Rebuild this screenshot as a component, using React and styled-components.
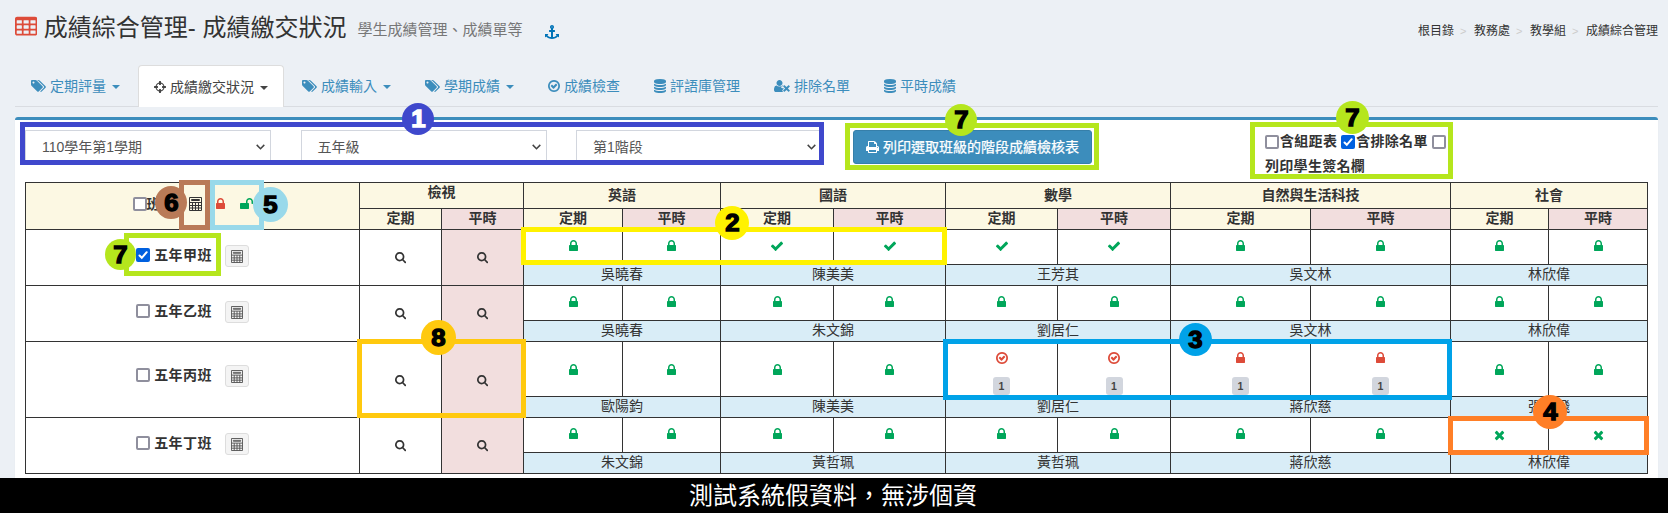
import React from "react";
import styled, { createGlobalStyle } from "styled-components";

const GlobalStyle = createGlobalStyle`
  *, *::before, *::after { box-sizing: border-box; }
  body {
    margin: 0;
    background: #ecf0f5;
    color: #333;
    font: 14px/20px "Liberation Sans", "Noto Sans CJK TC", sans-serif;
    overflow: hidden;
  }
`;

const ICONS = {
  table: [64, 0, 1664, "M64 288q0-66 47-113t113-47h1344q66 0 113 47t47 113v1088q0 66-47 113t-113 47h-1344q-66 0-113-47t-47-113zM224 384q-32 0-32 32v192q0 32 32 32h320q32 0 32-32v-192q0-32-32-32zM736 384q-32 0-32 32v192q0 32 32 32h320q32 0 32-32v-192q0-32-32-32zM1248 384q-32 0-32 32v192q0 32 32 32h320q32 0 32-32v-192q0-32-32-32zM224 768q-32 0-32 32v192q0 32 32 32h320q32 0 32-32v-192q0-32-32-32zM736 768q-32 0-32 32v192q0 32 32 32h320q32 0 32-32v-192q0-32-32-32zM1248 768q-32 0-32 32v192q0 32 32 32h320q32 0 32-32v-192q0-32-32-32zM224 1152q-32 0-32 32v192q0 32 32 32h320q32 0 32-32v-192q0-32-32-32zM736 1152q-32 0-32 32v192q0 32 32 32h320q32 0 32-32v-192q0-32-32-32zM1248 1152q-32 0-32 32v192q0 32 32 32h320q32 0 32-32v-192q0-32-32-32z"],
  anchor: [0, 0, 1792, "M960 256q0-26-19-45t-45-19-45 19-19 45 19 45 45 19 45-19 19-45zm832 928v352q0 22-20 30-8 2-12 2-12 0-23-9l-93-93q-119 143-318.5 226.5t-429.5 83.5-429.5-83.5-318.5-226.5l-93 93q-9 9-23 9-4 0-12-2-20-8-20-30v-352q0-14 9-23t23-9h352q22 0 30 20 8 19-7 35l-100 100q67 91 189.5 153.5t271.5 82.5v-647h-192q-26 0-45-19t-19-45v-128q0-26 19-45t45-19h192v-163q-58-34-93-92.5t-35-128.5q0-106 75-181t181-75 181 75 75 181q0 70-35 128.5t-93 92.5v163h192q26 0 45 19t19 45v128q0 26-19 45t-45 19h-192v647q149-20 271.5-82.5t189.5-153.5l-100-100q-15-16-7-35 8-20 30-20h352q14 0 23 9t9 23z"],
  tags: [0, 0, 1920, "M448 448q0-53-37.5-90.5t-90.5-37.5-90.5 37.5-37.5 90.5 37.5 90.5 90.5 37.5 90.5-37.5 37.5-90.5zm1067 576q0 53-37 90l-491 492q-39 37-91 37-53 0-90-37l-715-716q-38-37-64.5-101t-26.5-117v-416q0-52 38-90t90-38h416q53 0 117 26.5t102 64.5l715 714q37 39 37 91zm384 0q0 53-37 90l-491 492q-39 37-91 37-36 0-59-14t-53-45l470-470q37-37 37-90 0-52-37-91l-715-714q-38-38-102-64.5t-117-26.5h224q53 0 117 26.5t102 64.5l715 714q37 39 37 91z"],
  crosshairs: [128, 0, 1536, "M1325 1024h-109q-26 0-45-19t-19-45v-128q0-26 19-45t45-19h109q-32-108-112.5-188.5t-188.5-112.5v109q0 26-19 45t-45 19h-128q-26 0-45-19t-19-45v-109q-108 32-188.5 112.5t-112.5 188.5h109q26 0 45 19t19 45v128q0 26-19 45t-45 19h-109q32 108 112.5 188.5t188.5 112.5v-109q0-26 19-45t45-19h128q26 0 45 19t19 45v109q108-32 188.5-112.5t112.5-188.5zm339-192v128q0 26-19 45t-45 19h-143q-37 161-154.5 278.5t-278.5 154.5v143q0 26-19 45t-45 19h-128q-26 0-45-19t-19-45v-143q-161-37-278.5-154.5t-154.5-278.5h-143q-26 0-45-19t-19-45v-128q0-26 19-45t45-19h143q37-161 154.5-278.5t278.5-154.5v-143q0-26 19-45t45-19h128q26 0 45 19t19 45v143q161 37 278.5 154.5t154.5 278.5h143q26 0 45 19t19 45z"],
  checkCircle: [128, 0, 1536, "M1299 813l-422 422q-19 19-45 19t-45-19l-294-294q-19-19-19-45t19-45l102-102q19-19 45-19t45 19l147 147 275-275q19-19 45-19t45 19l102 102q19 19 19 45t-19 45zm141 83q0-148-73-273t-198-198-273-73-273 73-198 198-73 273 73 273 198 198 273 73 273-73 198-198 73-273zm224 0q0 209-103 385.5t-279.5 279.5-385.5 103-385.5-103-279.5-279.5-103-385.5 103-385.5 279.5-279.5 385.5-103 385.5 103 279.5 279.5 103 385.5z"],
  database: [128, 0, 1536, "M896 768q237 0 443-43t325-127v170q0 69-103 128t-280 93.5-385 34.5-385-34.5-280-93.5-103-128v-170q119 84 325 127t443 43zm0 768q237 0 443-43t325-127v170q0 69-103 128t-280 93.5-385 34.5-385-34.5-280-93.5-103-128v-170q119 84 325 127t443 43zm0-384q237 0 443-43t325-127v170q0 69-103 128t-280 93.5-385 34.5-385-34.5-280-93.5-103-128v-170q119 84 325 127t443 43zm0-1152q208 0 385 34.5t280 93.5 103 128v128q0 69-103 128t-280 93.5-385 34.5-385-34.5-280-93.5-103-128v-128q0-69 103-128t280-93.5 385-34.5z"],
  userTimes: [0, 0, 2048, "M704 896q-159 0-271.5-112.5t-112.5-271.5 112.5-271.5 271.5-112.5 271.5 112.5 112.5 271.5-112.5 271.5-271.5 112.5zm1077 320l249 249q9 9 9 23 0 13-9 22l-136 136q-9 9-22 9-14 0-23-9l-249-249-249 249q-9 9-23 9-13 0-22-9l-136-136q-9-9-9-22 0-14 9-23l249-249-249-249q-9-9-9-23 0-13 9-22l136-136q9-9 22-9 14 0 23 9l249 249 249-249q9-9 23-9 13 0 22 9l136 136q9 9 9 22 0 14-9 23zm-498 0l-181 181q-37 37-37 91 0 53 37 90l83 83q-21 3-44 3h-874q-121 0-194-69t-73-190q0-53 3.5-103.5t14-109 26.5-108.5 43-97.5 62-81 85.5-53.5 111.5-20q19 0 39 17 79 61 154.5 91.5t164.5 30.5 164.5-30.5 154.5-91.5q20-17 39-17 132 0 217 96h-223q-53 0-90 37t-37 90q0 54 37 91z"],
  print: [64, 0, 1664, "M448 1536h896v-256h-896v256zm0-640h896v-384h-160q-40 0-68-28t-28-68v-160h-640v640zm1152 64q0-26-19-45t-45-19-45 19-19 45 19 45 45 19 45-19 19-45zm128 0v416q0 13-9.5 22.5t-22.5 9.5h-224v160q0 40-28 68t-68 28h-960q-40 0-68-28t-28-68v-160h-224q-13 0-22.5-9.5t-9.5-22.5v-416q0-79 56.5-135.5t135.5-56.5h64v-544q0-40 28-68t68-28h672q40 0 88 20t76 48l152 152q28 28 48 76t20 88v256h64q79 0 135.5 56.5t56.5 135.5z"],
  lock: [320, 0, 1152, "M640 768h512v-192q0-106-75-181t-181-75-181 75-75 181v192zm832 96v576q0 40-28 68t-68 28h-960q-40 0-68-28t-28-68v-576q0-40 28-68t68-28h32v-192q0-184 132-316t316-132 316 132 132 316v192h32q40 0 68 28t28 68z"],
  unlock: [64, 0, 1664, "M1728 576v256q0 26-19 45t-45 19h-64q-26 0-45-19t-19-45v-256q0-106-75-181t-181-75-181 75-75 181v192h96q40 0 68 28t28 68v576q0 40-28 68t-68 28h-960q-40 0-68-28t-28-68v-576q0-40 28-68t68-28h672v-192q0-185 131.5-316.5t316.5-131.5 316.5 131.5 131.5 316.5z"],
  check: [0, 0, 1792, "M1671 566q0 40-28 68l-724 724-136 136q-28 28-68 28t-68-28l-136-136-362-362q-28-28-28-68t28-68l136-136q28-28 68-28t68 28l294 295 656-657q28-28 68-28t68 28l136 136q28 28 28 68z"],
  times: [192, 0, 1408, "M1490 1322q0 40-28 68l-136 136q-28 28-68 28t-68-28l-294-294-294 294q-28 28-68 28t-68-28l-136-136q-28-28-28-68t28-68l294-294-294-294q-28-28-28-68t28-68l136-136q28-28 68-28t68 28l294 294 294-294q28-28 68-28t68 28l136 136q28 28 28 68t-28 68l-294 294 294 294q28 28 28 68z"],
  search: [64, 128, 1664, "M1216 832q0-185-131.5-316.5t-316.5-131.5-316.5 131.5-131.5 316.5 131.5 316.5 316.5 131.5 316.5-131.5 131.5-316.5zm512 832q0 52-38 90t-90 38q-54 0-90-38l-343-342q-179 124-399 124-143 0-273.5-55.5t-225-150-150-225-55.5-273.5 55.5-273.5 150-225 225-150 273.5-55.5 273.5 55.5 225 150 150 225 55.5 273.5q0 220-124 399l343 343q37 37 37 90z"],
};

const IconSvg = styled.svg`
  display: block;
  flex: none;
  fill: ${(p) => p.$color || "currentColor"};
  margin-top: ${(p) => p.$drop || 0}px;
`;

function Icon({ name, size = 14, color, drop }) {
  const [x, y, w, d] = ICONS[name];
  return (
    <IconSvg
      viewBox={`${x} ${y} ${w} 1792`}
      width={(w * size) / 1792}
      height={size}
      $color={color}
      $drop={drop}
    >
      <path fillRule="evenodd" d={d} />
    </IconSvg>
  );
}

function Calculator({ width = 12, height = 13, color = "#333" }) {
  return (
    <svg width={width} height={height} viewBox="0 0 13 14" fill="none" stroke={color}>
      <path d="M.5 .5h12v13H.5zM2.5 2.5h8v1h-8zM.5 5.5h12M.5 8.5h12M.5 11h12M3.5 5.5v8M6.5 5.5v8M9.5 5.5v8" />
    </svg>
  );
}

const Page = styled.div`
  position: relative;
  width: 1668px;
  height: 513px;
  overflow: hidden;
  display: flex;
  flex-direction: column;
`;

const Header = styled.header`
  height: 65px;
  padding: 0 10px 0 15px;
  display: flex;
  justify-content: space-between;
`;

const TitleGroup = styled.div`
  display: flex;
  padding-top: 15px;
`;

const Title = styled.h1`
  margin: 0 0 0 6.5px;
  font-size: 24px;
  line-height: 26px;
  font-weight: 400;
  white-space: pre;
`;

const Subtitle = styled.small`
  margin: 5px 23px 0 11px;
  font-size: 15px;
  line-height: 20px;
  color: #777;
`;

const Breadcrumb = styled.nav`
  display: flex;
  padding-top: 21px;
  font-size: 12px;
  line-height: 20px;
  color: #333;
`;

const Crumb = styled.span`
  &:not(:first-child)::before {
    content: ">";
    display: inline-block;
    width: 20px;
    padding-left: 6px;
    font-size: 11px;
    color: #ccc;
  }
`;

const Tabs = styled.div`
  display: flex;
  gap: 2px;
  height: 42px;
  margin: 0 10px 0 15px;
  border-bottom: 1px solid #d9dce1;
`;

const Tab = styled.div`
  display: flex;
  align-items: center;
  height: ${(p) => (p.$active ? 42 : 41)}px;
  padding: 0 15px;
  border: 1px solid ${(p) => (p.$active ? "#ddd" : "transparent")};
  border-bottom: 0;
  border-radius: 4px 4px 0 0;
  background: ${(p) => (p.$active ? "#fff" : "transparent")};
  color: ${(p) => (p.$active ? "#444" : "#3c8dbc")};
`;

const TabText = styled.span`
  margin-left: 4px;
`;

const Caret = styled.i`
  margin: 2px 0 0 6px;
  border: 4px solid transparent;
  border-top-color: currentColor;
  border-bottom: 0;
`;

const Box = styled.main`
  flex: none;
  height: 361px;
  margin: 10px 10px 0 15px;
  border-top: 3px solid #3c8dbc;
  border-radius: 3px 3px 0 0;
  background: #fff;
  box-shadow: 0 1px 1px rgba(0, 0, 0, 0.1);
`;

const Toolbar = styled.div`
  display: flex;
  align-items: flex-start;
  height: 62px;
  padding: 10px 0 0 10px;
`;

const SelectBox = styled.div`
  display: flex;
  align-items: center;
  justify-content: space-between;
  width: 246px;
  height: 34px;
  margin-right: 29.5px;
  padding: 0 5px 0 16px;
  border: 1px solid #d2d6de;
  color: #555;
`;

const PrintButton = styled.button`
  display: flex;
  align-items: center;
  gap: 4px;
  width: 239px;
  height: 34px;
  margin-left: 1.5px;
  padding: 0 12px;
  border: 1px solid #367fa9;
  border-radius: 3px;
  background: #3c8dbc;
  color: #fff;
  font: inherit;
  -webkit-text-stroke: 0.25px currentColor;
  white-space: nowrap;
`;

const Options = styled.div`
  width: 190px;
  margin: -1px 0 0 173px;
  font-weight: 700;
  line-height: 25px;
`;

const OptionRow = styled.div`
  display: flex;
  align-items: center;
  gap: 1px;
`;

const OptionLabel = styled.span`
  margin-right: 3px;
  letter-spacing: 0.3px;
`;

const CheckBoxMark = styled.span`
  display: inline-flex;
  align-items: center;
  justify-content: center;
  flex: none;
  width: 14px;
  height: 14px;
  border: ${(p) => (p.$checked ? "0" : "2px solid #8f8f9d")};
  border-radius: 2px;
  background: ${(p) => (p.$checked ? "#0060df" : "#fff")};
`;

function CheckBox({ checked }) {
  return (
    <CheckBoxMark $checked={checked}>
      {checked && (
        <svg width="14" height="14" viewBox="0 0 14 14" fill="none" stroke="#fff" strokeWidth="2" strokeLinecap="round">
          <path d="M3.5 7.5l2.3 2.3 4.9-5.6" />
        </svg>
      )}
    </CheckBoxMark>
  );
}

const Table = styled.div`
  display: grid;
  grid-template-columns: 333px 81px 81px 98px 97px 112px 111px 111px 112px 139px 139px 97px 98px;
  grid-template-rows: 25px 20px 34px 20px 34px 20px 54px 20px 34px 20px;
  gap: 1px;
  width: 1623px;
  margin-left: 10px;
  padding: 1px;
  background: #333;
`;

const TONES = { head: "#fcf8e3", daily: "#f2dede", teacher: "#d9edf7", plain: "#fff" };

const Cell = styled.div`
  display: flex;
  flex-direction: ${(p) => (p.$stack ? "column" : "row")};
  align-items: center;
  justify-content: center;
  grid-column: span ${(p) => p.$cols || 1};
  grid-row: span ${(p) => p.$rows || 1};
  padding-top: ${(p) => p.$sink || 0}px;
  padding-bottom: ${(p) => p.$lift || 0}px;
  background: ${(p) => TONES[p.$tone || "plain"]};
  font-weight: ${(p) => (p.$bold ? 700 : 400)};
  line-height: 18px;
  overflow: hidden;
`;

const ClassName = styled.span`
  margin: 0 13px 0 4px;
  letter-spacing: 0.4px;
`;

const CalcButton = styled.span`
  display: flex;
  align-items: center;
  justify-content: center;
  width: 24px;
  height: 22px;
  margin-top: 2px;
  border: 1px solid #ddd;
  border-radius: 3px;
  background: #f4f4f4;
`;

const HeadTools = styled.div`
  display: flex;
  align-items: center;
  gap: 14.5px;
  margin-left: 14px;
`;

const CountBadge = styled.span`
  width: 17px;
  height: 18px;
  margin-top: 12px;
  border-radius: 3px;
  background: #d2d6de;
  color: #444;
  font-size: 10.5px;
  font-weight: 700;
  text-align: center;
`;

const Caption = styled.footer`
  flex: none;
  height: 35px;
  padding-right: 2px;
  background: #000;
  color: #fff;
  font-size: 24px;
  line-height: 35px;
  text-align: center;
`;

const Frame = styled.div`
  position: absolute;
  left: ${(p) => p.$x}px;
  top: ${(p) => p.$y}px;
  width: ${(p) => p.$w}px;
  height: ${(p) => p.$h}px;
  border: 5px solid ${(p) => p.$color};
`;

const Marker = styled.div`
  position: absolute;
  left: ${(p) => p.$x}px;
  top: ${(p) => p.$y}px;
  display: flex;
  align-items: center;
  justify-content: center;
  width: ${(p) => p.$w}px;
  height: ${(p) => p.$h}px;
  border-radius: 50%;
  background: ${(p) => p.$color};
  color: ${(p) => p.$ink || "#000"};
`;

const Digit = styled.b`
  font: 700 23px/24px "Liberation Sans", sans-serif;
  -webkit-text-stroke: 1.3px currentColor;
  transform: scaleX(1.12);
`;

const TABS = [
  ["tags", "定期評量", true],
  ["crosshairs", "成績繳交狀況", true, true],
  ["tags", "成績輸入", true],
  ["tags", "學期成績", true],
  ["checkCircle", "成績檢查"],
  ["database", "評語庫管理"],
  ["userTimes", "排除名單"],
  ["database", "平時成績"],
];

const SUBJECTS = ["英語", "國語", "數學", "自然與生活科技", "社會"];

const GREEN = "#00a65a";
const RED = "#dd4b39";

const L = "lock";
const C = "check";
const CLASSES = [
  { name: "五年甲班", checked: true, marks: [L, L, C, C, C, C, L, L, L, L], teachers: ["吳曉春", "陳美美", "王芳其", "吳文林", "林欣偉"] },
  { name: "五年乙班", marks: [L, L, L, L, L, L, L, L, L, L], teachers: ["吳曉春", "朱文錦", "劉居仁", "吳文林", "林欣偉"] },
  { name: "五年丙班", tall: true, marks: [L, L, L, L, "checkCircle!", "checkCircle!", "lock!", "lock!", L, L], teachers: ["歐陽鈞", "陳美美", "劉居仁", "蔣欣慈", "張小飛"] },
  { name: "五年丁班", marks: [L, L, L, L, L, L, L, L, "times", "times"], teachers: ["朱文錦", "黃哲珮", "黃哲珮", "蔣欣慈", "林欣偉"] },
];

const NOTES = [
  { n: 1, color: "#3f48cc", ink: "#fff", frame: [20, 122, 804, 43], dot: [402, 103, 32, 32] },
  { n: 7, color: "#b5e61d", frame: [845, 123, 254, 47], dot: [945, 104, 32, 32] },
  { n: 7, color: "#b5e61d", frame: [1250, 122, 203, 57], dot: [1336, 101, 33, 33] },
  { n: 6, color: "#b97a57", frame: [179, 180, 31, 50], dot: [155, 186, 32, 33] },
  { n: 5, color: "#99d9ea", frame: [210, 180, 54, 50], dot: [253, 187, 35, 35] },
  { n: 7, color: "#b5e61d", frame: [124, 233, 97, 43], dot: [105, 239, 31, 31] },
  { n: 2, color: "#fff200", frame: [521, 227, 426, 38], dot: [715, 206, 34, 34] },
  { n: 8, color: "#ffc90e", frame: [357, 339, 169, 79], dot: [421, 320, 35, 35] },
  { n: 3, color: "#00a2e8", frame: [943, 339, 509, 61], dot: [1179, 323, 33, 33] },
  { n: 4, color: "#ff7f27", frame: [1448, 416, 201, 39], dot: [1533, 395, 34, 34] },
];

function Select({ children }) {
  return (
    <SelectBox>
      {children}
      <svg width="9" height="6" viewBox="0 0 9 6" fill="none" stroke="#444" strokeWidth="1.5">
        <path d="M.7 .9l3.8 3.8L8.3 .9" />
      </svg>
    </SelectBox>
  );
}

function Mark({ mark, tall }) {
  const flagged = mark.endsWith("!");
  const name = mark.replace("!", "");
  const level = tall || name === "times";
  return (
    <Cell $stack $sink={flagged ? 8 : tall ? 1 : 0} $lift={level ? 0 : 2}>
      <Icon name={name} color={flagged ? RED : GREEN} />
      {flagged && <CountBadge>1</CountBadge>}
    </Cell>
  );
}

function ClassRows({ item }) {
  return (
    <>
      <Cell $rows={2} $bold $lift={item.tall ? 9 : 5}>
        <CheckBox checked={item.checked} />
        <ClassName>{item.name}</ClassName>
        <CalcButton><Calculator color="#555" /></CalcButton>
      </Cell>
      <Cell $rows={2} $sink={item.tall ? 3 : 0}><Icon name="search" size={12} /></Cell>
      <Cell $rows={2} $sink={item.tall ? 3 : 0} $tone="daily"><Icon name="search" size={12} /></Cell>
      {item.marks.map((m, i) => <Mark key={i} mark={m} tall={item.tall} />)}
      {item.teachers.map((t, i) => <Cell key={i} $cols={2} $tone="teacher" $lift={3}>{t}</Cell>)}
    </>
  );
}

export default function App() {
  return (
    <Page lang="zh-TW">
      <GlobalStyle />
      <Header>
        <TitleGroup>
          <Icon name="table" size={24} color={RED} />
          <Title>成績綜合管理- 成績繳交狀況</Title>
          <Subtitle>學生成績管理、成績單等</Subtitle>
          <Icon name="anchor" size={14} color="#0073b7" drop={10} />
        </TitleGroup>
        <Breadcrumb>
          {["根目錄", "教務處", "教學組", "成績綜合管理"].map((c) => <Crumb key={c}>{c}</Crumb>)}
        </Breadcrumb>
      </Header>
      <Tabs>
        {TABS.map(([icon, label, menu, active]) => (
          <Tab key={label} $active={active}>
            <Icon name={icon} />
            <TabText>{label}</TabText>
            {menu && <Caret />}
          </Tab>
        ))}
      </Tabs>
      <Box>
        <Toolbar>
          <Select>110學年第1學期</Select>
          <Select>五年級</Select>
          <Select>第1階段</Select>
          <PrintButton><Icon name="print" />列印選取班級的階段成績檢核表</PrintButton>
          <Options>
            <OptionRow>
              <CheckBox /><OptionLabel>含組距表</OptionLabel>
              <CheckBox checked /><OptionLabel>含排除名單</OptionLabel>
              <CheckBox />
            </OptionRow>
            <OptionLabel>列印學生簽名欄</OptionLabel>
          </Options>
        </Toolbar>
        <Table>
          <Cell $rows={2} $tone="head" $bold $lift={5}>
            <CheckBox />班級
            <HeadTools>
              <Calculator width={13} height={14} />
              <Icon name="lock" color={RED} />
              <Icon name="unlock" color={GREEN} />
            </HeadTools>
          </Cell>
          <Cell $cols={2} $tone="head" $bold $lift={8}>檢視</Cell>
          {SUBJECTS.map((s) => <Cell key={s} $cols={2} $tone="head" $bold $lift={1}>{s}</Cell>)}
          {[0, 1, 2, 3, 4, 5].map((i) => (
            <React.Fragment key={i}>
              <Cell $tone="head" $bold $lift={3}>定期</Cell>
              <Cell $tone="daily" $bold $lift={3}>平時</Cell>
            </React.Fragment>
          ))}
          {CLASSES.map((c) => <ClassRows key={c.name} item={c} />)}
        </Table>
      </Box>
      <Caption>測試系統假資料，無涉個資</Caption>
      {NOTES.map((note, i) => (
        <Frame key={i} $x={note.frame[0]} $y={note.frame[1]} $w={note.frame[2]} $h={note.frame[3]} $color={note.color} />
      ))}
      {NOTES.map((note, i) => (
        <Marker key={i} $x={note.dot[0]} $y={note.dot[1]} $w={note.dot[2]} $h={note.dot[3]} $color={note.color} $ink={note.ink}>
          <Digit>{note.n}</Digit>
        </Marker>
      ))}
    </Page>
  );
}
